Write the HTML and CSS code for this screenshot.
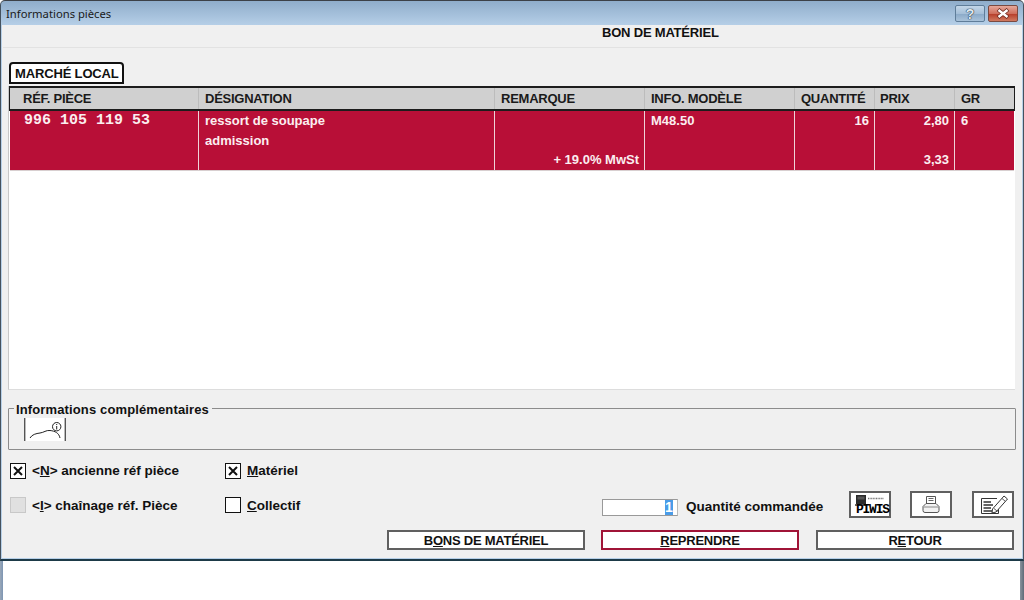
FILE: index.html
```html
<!DOCTYPE html>
<html lang="fr">
<head>
<meta charset="utf-8">
<title>Informations pièces</title>
<link rel="stylesheet" href="styles.css">
</head>
<body>
<div class="window">
  <div class="titlebar">
    <span class="title">Informations pièces</span>
    <div class="winbtns">
      <span class="winbtn help">?</span>
      <span class="winbtn close">
        <svg width="16" height="11" viewBox="0 0 16 11"><path d="M3 1.5 L13 9.5 M13 1.5 L3 9.5" stroke="#6e2a20" stroke-width="4" fill="none"/><path d="M3.5 2 L12.5 9 M12.5 2 L3.5 9" stroke="#fff" stroke-width="2.4" fill="none"/></svg>
      </span>
    </div>
  </div>
  <div class="client">
    <div class="headline"><span class="headline-text">BON DE MATÉRIEL</span></div>
    <div class="tabs"><span class="tab">MARCHÉ LOCAL</span></div>
    <div class="table">
      <div class="thead">
        <span class="th c1">RÉF. PIÈCE</span>
        <span class="th c2">DÉSIGNATION</span>
        <span class="th c3">REMARQUE</span>
        <span class="th c4">INFO. MODÈLE</span>
        <span class="th c5">QUANTITÉ</span>
        <span class="th c6">PRIX</span>
        <span class="th c7">GR</span>
      </div>
      <div class="row">
        <div class="td c1 mono">996 105 119 53</div>
        <div class="td c2"><span>ressort de soupape</span><span>admission</span></div>
        <div class="td c3 bottom"><span>+ 19.0% MwSt</span></div>
        <div class="td c4"><span>M48.50</span></div>
        <div class="td c5 right"><span>16</span></div>
        <div class="td c6 right split"><span>2,80</span><span>3,33</span></div>
        <div class="td c7"><span>6</span></div>
      </div>
    </div>
    <div class="group">
      <span class="legend">Informations complémentaires</span>
      <div class="info-icon">
        <svg width="42" height="23" viewBox="0 0 42 23">
          <path d="M0.7 0 V23 M41.3 0 V23" stroke="#555" stroke-width="1.4" fill="none"/>
          <path d="M6 20 C8 16.5 12 15.5 16 15 C20 14.5 22 12 26 12.5 C31 13 35 15 36 20" stroke="#222" stroke-width="1" fill="none"/>
          <circle cx="32.7" cy="8.7" r="4.2" stroke="#222" stroke-width="1" fill="#fff"/>
          <path d="M32.7 6 V7 M32.7 8 V11.5" stroke="#222" stroke-width="1" fill="none"/>
        </svg>
      </div>
    </div>
    <div class="options">
      <div class="opt-row first">
        <label class="check left"><span class="box"><svg width="12" height="12" viewBox="0 0 12 12"><path d="M2 2 L10 10 M10 2 L2 10" stroke="#111" stroke-width="2" fill="none"/></svg></span><span>&lt;<u>N</u>&gt; ancienne réf pièce</span></label>
        <label class="check"><span class="box"><svg width="12" height="12" viewBox="0 0 12 12"><path d="M2 2 L10 10 M10 2 L2 10" stroke="#111" stroke-width="2" fill="none"/></svg></span><span><u>M</u>atériel</span></label>
      </div>
      <div class="opt-row second">
        <label class="check left"><span class="box off"></span><span class="low">&lt;<u>I</u>&gt; chaînage réf. Pièce</span></label>
        <label class="check"><span class="box"></span><span class="low"><u>C</u>ollectif</span></label>
        <div class="qty">
          <span class="qty-input"><span class="sel">1</span></span>
          <span class="qty-label">Quantité commandée</span>
        </div>
        <div class="tools">
          <span class="tool">
            <svg class="piwis-art" width="38" height="23" viewBox="0 0 38 23">
              <rect x="5" y="2" width="10" height="9" fill="#2a2a2a"/>
              <rect x="6.5" y="3.5" width="7" height="3" fill="#555"/>
              <rect x="4" y="11" width="12" height="2" fill="#666"/>
              <path d="M17 5.5 H33" stroke="#777" stroke-width="1.4" stroke-dasharray="1 0.6" fill="none"/>
            </svg>
            <span class="piwis">PIWIS</span>
          </span>
          <span class="tool">
            <svg width="20" height="20" viewBox="0 0 20 20">
              <path d="M5.5 1.5 H14.5 V8.5 H5.5 Z" stroke="#555" fill="#fff"/>
              <path d="M7.5 3.5 H12.5 M7.5 5.5 H12.5" stroke="#666" fill="none"/>
              <path d="M5 8.5 H15 L18 11.5 V15.5 Q18 17.5 16 17.5 H4 Q2 17.5 2 15.5 V11.5 Z" stroke="#555" fill="#f2f2f2"/>
              <path d="M2.5 12 H17.5" stroke="#888" fill="none"/>
            </svg>
          </span>
          <span class="tool">
            <svg width="30" height="20" viewBox="0 0 30 20">
              <path d="M20.5 12 V18.5 H3.5 V3.5 H19" stroke="#333" fill="none"/>
              <path d="M5.5 7 H13 M5.5 10 H15 M5.5 13 H13 M5.5 16 H14" stroke="#333" stroke-width="1.3" fill="none"/>
              <path d="M14.5 14 L26 1 L29.5 4 L18 17 L14 18 Z" stroke="#333" fill="#fff"/>
              <path d="M16 13.5 L19.5 16.5 M24 3.5 L27.5 6.5" stroke="#555" fill="none"/>
            </svg>
          </span>
        </div>
      </div>
      <div class="actions">
        <span class="action"><span>B<u>O</u>NS DE MATÉRIEL</span></span>
        <span class="action active"><span><u>R</u>EPRENDRE</span></span>
        <span class="action"><span>R<u>E</u>TOUR</span></span>
      </div>
    </div>
  </div>
</div>
<div class="below">
  <span class="edge"></span>
  <span class="edge dark"></span>
</div>
</body>
</html>
```
FILE: styles.css
```css
* { box-sizing: border-box; }
html, body { margin: 0; padding: 0; }
body {
  width: 1024px;
  height: 600px;
  overflow: hidden;
  background: #fff;
  font-family: "Liberation Sans", Arial, sans-serif;
  color: #111;
}
.window {
  width: 1024px;
  height: 561px;
  display: flex;
  flex-direction: column;
  background: linear-gradient(#8fadcb, #b7d0e8 25px);
  border-top: 1px solid #3c4148;
  border-left: 1px solid #45525e;
  border-right: 1px solid #45525e;
  border-bottom: 2px solid #1d3a48;
  border-radius: 5px 5px 0 0;
  padding: 0 1px 1px 1px;
}
.titlebar {
  height: 24px;
  flex: none;
  display: flex;
  align-items: flex-start;
  justify-content: space-between;
}
.title {
  font-family: "Noto Sans", sans-serif;
  font-size: 11.25px;
  line-height: 14px;
  margin: 6px 0 0 4px;
  color: #1a1a1a;
}
.winbtns { display: flex; gap: 3px; margin: 4px 4px 0 0; }
.winbtn {
  height: 17px;
  border-radius: 2px;
  display: flex;
  align-items: center;
  justify-content: center;
}
.help {
  width: 30px;
  border: 1px solid #5f7d99;
  background: linear-gradient(#c3d6e8, #a5bfd8 50%, #8cabc9 55%, #a9c2da);
  color: #dfe8f0;
  font-size: 14px;
  font-weight: bold;
  text-shadow: 0 0 1px #2d3c4c, 0 0 1px #2d3c4c, 0 0 1px #2d3c4c;
}
.close {
  width: 30px;
  border: 1px solid #7a4a40;
  background: linear-gradient(#e6a89a, #cf6f5c 50%, #b8402c 55%, #d07a60);
}
.client {
  flex: 1;
  display: flex;
  flex-direction: column;
  background: #f0f0f0;
  padding-left: 1px;
}
.headline {
  height: 23px;
  flex: none;
  border-bottom: 1px solid #e2e2e2;
  padding-left: 599px;
  font-size: 13px;
  font-weight: bold;
  line-height: 16px;
}
.headline-text { letter-spacing: -0.2px; }
.tabs { height: 24px; margin-top: 14px; padding-left: 6px; flex: none; }
.tab {
  display: inline-block;
  height: 22px;
  width: 115px;
  border: 2px solid #111;
  border-radius: 4px 4px 0 0;
  background: #fff;
  padding-left: 4px;
  font-size: 13px;
  letter-spacing: -0.15px;
  font-weight: bold;
  line-height: 19px;
  white-space: nowrap;
}
.table {
  flex: none;
  height: 304px;
  margin-left: 5px;
  width: 1007px;
  background: #fff;
  border-left: 1px solid #c8c8c8;
  border-bottom: 1px solid #ddd;
}
.thead, .row {
  display: grid;
  grid-template-columns: 189px 296px 150px 150px 80px 80px 59px;
}
.thead {
  height: 25px;
  width: 1006px;
  background: #d0d0d0;
  border: 2px solid #1c1c1c;
  border-width: 2px 1px 2px 1px;
}
.th {
  border-right: 1px solid #bcbcbc;
  padding-left: 6px;
  font-size: 13px;
  letter-spacing: -0.25px;
  font-weight: bold;
  line-height: 21px;
  color: #1a1a1a;
  white-space: nowrap;
}
.th.c1 { padding-left: 13px; }
.th.c6 { padding-left: 5px; }
.th.c7, .td.c7 { border-right: 0; }
.row {
  height: 60px;
  width: 1004px;
  margin-left: 1px;
  background: #b80f37;
  color: #fbeef0;
  border-bottom: 1px solid #d8cfd0;
}
.td {
  display: flex;
  flex-direction: column;
  padding: 0 6px;
  border-right: 1px solid #efd3d9;
  font-size: 13px;
  font-weight: bold;
  line-height: 20px;
  white-space: nowrap;
}
.td.mono {
  font-family: "Liberation Mono", "Courier New", monospace;
  font-size: 15px;
  padding: 2px 0 0 14px;
  line-height: 16px;
  display: block;
  white-space: pre;
}
.td.bottom { justify-content: flex-end; align-items: flex-end; padding-right: 5px; }
.td.right { align-items: flex-end; padding-right: 5px; }
.td.split { justify-content: space-between; }
.group {
  position: relative;
  flex: none;
  height: 42px;
  margin: 18px 6px 0 5px;
  border: 1px solid #8c8c8c;
  border-radius: 1px;
  padding: 9px 0 0 15px;
}
.legend {
  position: absolute;
  top: -7px;
  left: 5px;
  padding: 0 3px 0 2px;
  background: #f0f0f0;
  font-size: 13px;
  letter-spacing: 0.13px;
  font-weight: bold;
  line-height: 16px;
  white-space: nowrap;
}
.info-icon { width: 42px; height: 23px; background: #fff; }
.info-icon svg { display: block; }
.options { flex: 1; display: flex; flex-direction: column; padding-left: 7px; }
.opt-row { display: flex; align-items: flex-start; }
.first { height: 16px; margin-top: 13px; }
.second { height: 27px; margin-top: 12px; }
.check {
  display: flex;
  align-items: center;
  gap: 6px;
  font-size: 13.5px;
  font-weight: bold;
  line-height: 16px;
  height: 16px;
  white-space: nowrap;
}
.low { padding-top: 2px; }
.second .check { margin-top: 6px; }
.check.left { width: 215px; }
.box {
  width: 16px;
  height: 16px;
  flex: none;
  border: 1px solid #111;
  background: #fff;
  display: flex;
  align-items: center;
  justify-content: center;
}
.box.off { background: #e0e0e0; border-color: #c8c8c8; }
.second .check:nth-child(2) { width: 377px; }
.qty { display: flex; align-items: center; gap: 8px; margin-top: 8px; height: 17px; width: 247px; }
.qty-input {
  width: 76px;
  height: 17px;
  flex: none;
  background: #fff;
  border: 1px solid #999;
  border-right-color: #bbb;
  display: flex;
  justify-content: flex-end;
  padding-right: 4px;
}
.sel {
  background: #4a9ce8;
  color: #fff;
  font-size: 14px;
  font-weight: bold;
  line-height: 15px;
  width: 8px;
  text-align: center;
}
.qty-label { font-size: 13.5px; font-weight: bold; white-space: nowrap; padding-bottom: 2px; }
.tools { display: flex; gap: 19px; }
.tool {
  position: relative;
  width: 42px;
  height: 27px;
  flex: none;
  background: #fff;
  border: 2px solid #606060;
  display: flex;
  align-items: center;
  justify-content: center;
}
.tool:nth-child(2) { margin-right: 1px; }
.piwis-art { position: absolute; left: 0; top: 0; }
.piwis {
  position: absolute;
  left: 5px;
  bottom: 0;
  font-family: "Liberation Mono", monospace;
  font-size: 13px;
  font-weight: bold;
  line-height: 12px;
  letter-spacing: -1.25px;
  color: #000;
}
.actions { display: flex; gap: 16px; padding-left: 377px; margin-top: 12px; }
.action {
  width: 198px;
  height: 20px;
  flex: none;
  background: #fff;
  border: 2px solid #606060;
  text-align: center;
  font-size: 13px;
  letter-spacing: -0.25px;
  font-weight: bold;
  line-height: 17px;
  white-space: nowrap;
}
.action:nth-child(2) { border-color: #a01437; }
.action:nth-child(3) { margin-left: 1px; }
.below { height: 39px; display: flex; justify-content: space-between; }
.edge { width: 3px; height: 100%; background: linear-gradient(90deg, #9aa8b8, #7d95b3); }
.edge.dark { width: 4px; background: linear-gradient(90deg, #8a949e, #5f6b78); }
```
